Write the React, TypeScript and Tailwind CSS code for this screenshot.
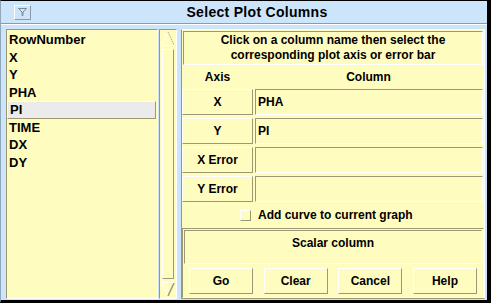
import React from "react";

const columns = ["RowNumber", "X", "Y", "PHA", "PI", "TIME", "DX", "DY"];

const axisRows = [
  { label: "X", value: "PHA" },
  { label: "Y", value: "PI" },
  { label: "X Error", value: "" },
  { label: "Y Error", value: "" },
];

const raised =
  "border border-t-white border-l-white border-b-[#9c9874] border-r-[#9c9874]";
const sunken =
  "border border-t-[#9c9874] border-l-[#9c9874] border-b-white border-r-white";

function ScrollBar() {
  return (
    <div className={`flex h-full w-[18px] flex-col ${sunken} bg-[#fffcc0]`}>
      <svg width="16" height="17" viewBox="0 0 16 17" className="shrink-0">
        <path d="M2 15 L8 2" stroke="#ffffff" strokeWidth="1" fill="none" />
        <path d="M8 2 L14 15" stroke="#9c9874" strokeWidth="1" strokeDasharray="1 1" fill="none" />
        <path d="M2 15.5 H14" stroke="#ffffff" strokeWidth="1" />
      </svg>
      <div className={`mx-[2px] my-[2px] flex-1 ${raised}`} />
      <svg width="16" height="17" viewBox="0 0 16 17" className="shrink-0">
        <path d="M2 2 L8 15" stroke="#ffffff" strokeWidth="1" fill="none" />
        <path d="M14 2 L8 15" stroke="#9c9874" strokeWidth="1.5" fill="none" />
        <path d="M2 1.5 H14" stroke="#ffffff" strokeWidth="1" />
      </svg>
    </div>
  );
}

export default function App() {
  return (
    <div
      className="flex h-[303px] w-[491px] flex-col overflow-hidden border-t border-r-4 border-b-[3px] border-l border-t-black border-r-black border-b-black border-l-[#8fa6bb] bg-[#cde5fb] text-black"
      style={{ fontFamily: '"Liberation Sans", Arial, sans-serif' }}
    >
      {/* title bar */}
      <div className="flex h-[23px] shrink-0 items-center border-b border-b-[#8f9aa6]">
        <div className="ml-[13px] flex h-[15px] w-[17px] items-center justify-center border border-t-white border-l-white border-b-[#8f9aa6] border-r-[#8f9aa6]">
          <svg width="9" height="8" viewBox="0 0 9 8">
            <path d="M0.5 0.5 H8.5 L5 4 V7.5 H4 V4 Z" fill="none" stroke="#7d8a96" strokeWidth="1" />
          </svg>
        </div>
        <div className="flex-1 pr-[4px] text-center text-[14px] font-bold tracking-[0.3px]">
          Select Plot Columns
        </div>
      </div>
      <div className="h-px shrink-0 bg-white" />

      {/* content */}
      <div className="flex min-h-0 flex-1 gap-[1px] pt-[4px] pr-[2px] pb-[1px] pl-[5px]">
        {/* column list */}
        <div className={`h-full w-[152px] shrink-0 ${sunken} bg-[#fffcc0] pt-[1px]`}>
          {columns.map((c) => (
            <div
              key={c}
              className={`flex h-[17.5px] items-center pl-[2px] text-[13px] font-bold ${
                c === "PI"
                  ? "mr-[1px] border border-t-white border-l-white border-b-[#9c9874] border-r-[#9c9874] bg-[#ebebeb]"
                  : ""
              }`}
            >
              {c}
            </div>
          ))}
        </div>

        <ScrollBar />

        {/* right panel */}
        <div className="ml-[3px] flex h-full flex-1 flex-col bg-[#fffcc0] border border-t-white border-l-[#9c9874] border-r-white border-b-[#9c9874]">
          <div className={`mx-[1px] mt-[1px] flex h-[34px] shrink-0 flex-col items-center justify-center ${sunken} text-[12px] font-bold leading-[15px]`}>
            <div>Click on a column name then select the</div>
            <div>corresponding plot axis or error bar</div>
          </div>

          <div className="flex h-[24px] shrink-0 items-center text-[12px] font-bold">
            <div className="w-[71px] text-center">Axis</div>
            <div className="flex-1 text-center">Column</div>
          </div>

          <div className="flex shrink-0 flex-col gap-[3px]">
            {axisRows.map((r) => (
              <div key={r.label} className="flex h-[26px] gap-[2px] pr-[1px]">
                <div className={`flex w-[71px] items-center justify-center ${raised} text-[12px] font-bold`}>
                  {r.label}
                </div>
                <div className={`flex flex-1 items-center pl-[2px] ${sunken} text-[12px] font-bold`}>
                  {r.value}
                </div>
              </div>
            ))}
          </div>

          <div className="flex h-[26px] shrink-0 items-center pl-[58px] text-[12px] font-bold">
            <div className={`mr-[7px] h-[11px] w-[11px] ${raised}`} />
            Add curve to current graph
          </div>

          <div className="flex flex-1 flex-col border border-t-[#9c9874] border-l-[#9c9874] border-b-white border-r-white">
            <div className={`mx-[1px] mt-[1px] flex h-[34px] items-start justify-center pt-[3px] ${sunken} text-[12px] font-bold`}>
              Scalar column
            </div>
            <div className="flex flex-1 items-center justify-between px-[6px]">
              {["Go", "Clear", "Cancel", "Help"].map((b) => (
                <div
                  key={b}
                  className={`flex h-[26px] w-[64px] items-center justify-center ${raised} text-[12px] font-bold`}
                >
                  {b}
                </div>
              ))}
            </div>
          </div>
        </div>
      </div>
    </div>
  );
}
